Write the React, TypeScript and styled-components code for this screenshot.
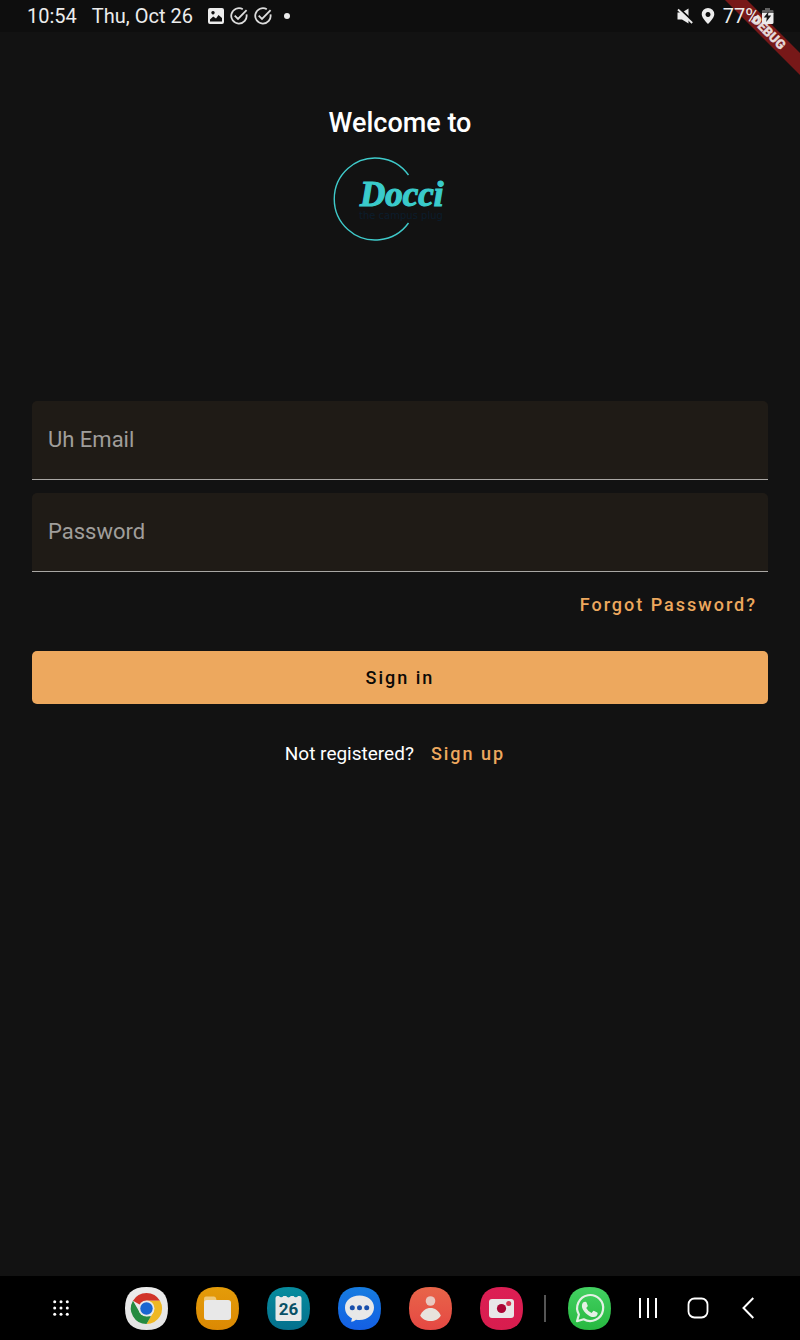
import React from 'react';
import styled, { createGlobalStyle } from 'styled-components';

const GlobalStyle = createGlobalStyle`
  *, *::before, *::after { box-sizing: border-box; }
  body {
    margin: 0;
    background: #121212;
    color: #fff;
    font-family: Roboto, "Liberation Sans", sans-serif;
  }
  button, input { font: inherit; color: inherit; letter-spacing: inherit; }
`;

const Screen = styled.div`
  position: relative;
  display: flex;
  flex-direction: column;
  min-height: 100vh;
  overflow: hidden;
`;

const StatusBar = styled.header`
  display: flex;
  justify-content: space-between;
  align-items: center;
  height: 32px;
  padding: 0 26px 0 27px;
  background: #0e0e0e;
  color: #ececec;
  font-size: 20px;
  line-height: 32px;
`;

const StatusGroup = styled.div<{ $gap: number }>`
  position: relative;
  z-index: 2;
  display: flex;
  align-items: center;
  gap: ${({ $gap }) => $gap}px;
  svg { display: block; }
`;

const StatusIcons = styled.div`
  display: flex;
  align-items: center;
  gap: 6px;
`;

const BatteryLevel = styled.div`
  display: flex;
  align-items: center;
  gap: 1px;
`;

const Ribbon = styled.svg`
  position: absolute;
  top: 0;
  right: 0;
  z-index: 1;
`;

const Main = styled.main`
  flex: 1;
  display: flex;
  flex-direction: column;
  padding: 75px 32px 32px;
`;

const Brand = styled.div`
  display: flex;
  flex-direction: column;
  align-items: center;
  gap: 14px;
  svg { display: block; }
`;

const Title = styled.h1`
  margin: 0;
  font-size: 27px;
  line-height: 32px;
  font-weight: 500;
`;

const Form = styled.form`
  display: flex;
  flex-direction: column;
  margin-top: 158px;
`;

const Field = styled.input`
  width: 100%;
  height: 79px;
  margin-bottom: 13px;
  padding: 0 16px 2px;
  border: 0;
  border-bottom: 1px solid #a9a7a4;
  border-radius: 5px 5px 0 0;
  background: #1f1b16;
  color: #fff;
  font-size: 22px;
  outline: none;
  &::placeholder { color: #a09e9b; opacity: 1; }
`;

const TextLink = styled.a`
  color: #eda85e;
  font-size: 18px;
  line-height: 24px;
  font-weight: 500;
  letter-spacing: 2px;
  text-decoration: none;
`;

const ForgotRow = styled.div`
  display: flex;
  justify-content: flex-end;
  padding: 8px 11px 0 0;
`;

const SubmitButton = styled.button`
  height: 53px;
  margin-top: 34px;
  border: 0;
  border-radius: 5px;
  background: #eda85e;
  color: #0c0906;
  font-size: 18px;
  font-weight: 500;
  letter-spacing: 2px;
`;

const SignUpRow = styled.p`
  display: flex;
  justify-content: center;
  gap: 17px;
  margin: 38px 10px 0 0;
  font-size: 19px;
  line-height: 24px;
`;

const NavBar = styled.nav`
  display: flex;
  align-items: center;
  justify-content: center;
  height: 64px;
  padding: 0 27px 0 39px;
  background: #000;
`;

const NavButton = styled.button<{ $width: number }>`
  display: flex;
  align-items: center;
  justify-content: center;
  width: ${({ $width }) => $width}px;
  height: 43px;
  padding: 0;
  border: 0;
  background: none;
`;

const AppRow = styled.div`
  display: flex;
  gap: 28px;
  margin-left: 43px;
`;

const Divider = styled.span`
  width: 2px;
  height: 27px;
  margin: 0 22px 0 21px;
  background: #555;
`;

const SystemButtons = styled.div`
  display: flex;
  margin-left: 12px;
`;

const tileShape =
  'M21.5 0C36 0 43 7 43 21.5S36 43 21.5 43 0 36 0 21.5 7 0 21.5 0Z';

type TileProps = { label: string; from: string; to: string; children: React.ReactNode };

function AppTile({ label, from, to, children }: TileProps) {
  const id = `tile-${label.toLowerCase()}`;
  return (
    <NavButton type="button" $width={43} aria-label={label}>
      <svg width="43" height="43" viewBox="0 0 43 43">
        <defs>
          <linearGradient id={id} x1="0" y1="0" x2="0" y2="1">
            <stop offset="0" stopColor={from} />
            <stop offset="1" stopColor={to} />
          </linearGradient>
        </defs>
        <path d={tileShape} fill={`url(#${id})`} />
        {children}
      </svg>
    </NavButton>
  );
}

const TaskDone = () => (
  <svg width="18" height="18" viewBox="0 0 18 18" fill="none" stroke="#dcdcdc" strokeWidth="1.8">
    <path d="M12.8 2.2A7.7 7.7 0 1 0 16.5 7.4" />
    <path d="M4.7 8.7 8 12 16.6 3.2" />
  </svg>
);

const DocciLogo = () => (
  <svg width="134" height="90" viewBox="0 0 134 90" role="img" aria-label="Docci, the campus plug">
    <path d="M75.500 22A41 41 0 1 0 75.500 70" fill="none" stroke="#3fcaca" strokeWidth="1.4" />
    <text
      x="27"
      y="53"
      fill="#3acbcb"
      stroke="#3acbcb"
      strokeWidth="1.2"
      fontFamily='"Liberation Serif", serif'
      fontSize="35"
      fontStyle="italic"
      fontWeight="700"
    >
      Docci
    </text>
    <text x="26" y="66" fill="#0c1d2c" fontFamily='"DejaVu Sans", sans-serif' fontSize="10">
      the campus plug
    </text>
  </svg>
);

export default function App() {
  return (
    <Screen>
      <GlobalStyle />
      <StatusBar>
        <StatusGroup $gap={15}>
          <span>10:54</span>
          <span>Thu, Oct 26</span>
          <StatusIcons>
            <svg width="16" height="16" viewBox="0 0 16 16">
              <path
                fill="#ececec"
                fillRule="evenodd"
                d="M2 0h12a2 2 0 0 1 2 2v12a2 2 0 0 1-2 2H2a2 2 0 0 1-2-2V2a2 2 0 0 1 2-2ZM2 13.500H14V10L10.500 7 8 10.500 5.200 8.500 2 11.500ZM5 3a1.700 1.700 0 1 0 .01 0Z"
              />
            </svg>
            <TaskDone />
            <TaskDone />
            <svg width="18" height="18" viewBox="0 0 18 18">
              <circle cx="9" cy="9" r="3" fill="#ececec" />
            </svg>
          </StatusIcons>
        </StatusGroup>
        <StatusGroup $gap={8}>
          <svg width="16" height="16" viewBox="0 0 16 16">
            <path fill="#ececec" d="M.5 4.500H5L11.500.500V15.500L5 11.500H.500Z" />
            <path d="M2 .2 16 13.500" stroke="#0e0e0e" strokeWidth="2" />
            <path d="M1 1.500 15.200 15" stroke="#ececec" strokeWidth="1.800" />
          </svg>
          <svg width="14" height="16" viewBox="0 0 14 16">
            <path
              fill="#ececec"
              fillRule="evenodd"
              d="M7 0a6.300 6.300 0 0 1 6.300 6.300C13.300 10.300 7 16 7 16S.7 10.300.7 6.300A6.300 6.300 0 0 1 7 0ZM7 3.900a2.500 2.500 0 1 0 .01 0Z"
            />
          </svg>
          <BatteryLevel>
            <span>77%</span>
            <svg width="13" height="18" viewBox="0 0 13 18">
              <path fill="#626262" d="M4 1h5v2h2.500a1 1 0 0 1 1 1v3H1V4a1 1 0 0 1 1-1h2Z" />
              <path fill="#ececec" d="M1 6h11.500v9.500a1.500 1.500 0 0 1-1.500 1.500H2.500A1.500 1.500 0 0 1 1 15.500Z" />
              <path fill="#171717" d="M7.500 4.500 2.800 10.500h3l-.6 4.500 5-6.500H7Z" />
            </svg>
          </BatteryLevel>
        </StatusGroup>
      </StatusBar>

      <Ribbon width="76" height="76" viewBox="0 0 76 76" role="img" aria-label="DEBUG">
        <path fill="#771818" d="M1 0H23L76 53V75Z" />
        <text
          transform="translate(45 32) rotate(45)"
          y="5"
          textAnchor="middle"
          fill="#e6dada"
          fontFamily='Roboto, "Liberation Sans", sans-serif'
          fontSize="13"
          fontWeight="900"
          stroke="#e6dada"
          strokeWidth=".4"
        >
          DEBUG
        </text>
      </Ribbon>

      <Main>
        <Brand>
          <Title>Welcome to</Title>
          <DocciLogo />
        </Brand>
        <Form onSubmit={(event) => event.preventDefault()}>
          <Field type="email" aria-label="Uh Email" placeholder="Uh Email" />
          <Field type="password" aria-label="Password" placeholder="Password" />
          <ForgotRow>
            <TextLink href="#forgot">Forgot Password?</TextLink>
          </ForgotRow>
          <SubmitButton type="submit">Sign in</SubmitButton>
        </Form>
        <SignUpRow>
          <span>Not registered?</span>
          <TextLink href="#signup">Sign up</TextLink>
        </SignUpRow>
      </Main>

      <NavBar>
        <NavButton type="button" $width={43} aria-label="All apps">
          <svg width="18" height="18" viewBox="0 0 18 18" fill="#fff">
            {[2.7, 9, 15.3].map((y) =>
              [2.7, 9, 15.3].map((x) => <circle key={`${x}-${y}`} cx={x} cy={y} r="1.5" />),
            )}
          </svg>
        </NavButton>
        <AppRow>
          <AppTile label="Chrome" from="#ececec" to="#e4e4e4">
            <path d="M21.500 21.500 7.980 13.700A15.600 15.600 0 0 1 35 13.700H21.500Z" fill="#d13429" />
            <path d="M21.500 13.700H35A15.600 15.600 0 0 1 21.500 37.100L28.250 25.400Z" fill="#efb824" />
            <path d="M7.980 13.700 14.750 25.400 21.500 29.300H26L21.500 37.100A15.600 15.600 0 0 1 7.980 13.700Z" fill="#258b40" />
            <circle cx="21.500" cy="21.500" r="8" fill="#e8e8e8" />
            <circle cx="21.500" cy="21.500" r="6.200" fill="#1966d2" />
          </AppTile>
          <AppTile label="Files" from="#e49c09" to="#dc8903">
            <path d="M8 20v-8.500a2 2 0 0 1 2-2h8q1.500 0 2 1.500l1 4Z" fill="#efc878" />
            <rect x="8" y="13" width="27" height="20" rx="3" fill="#e8e8e8" />
          </AppTile>
          <AppTile label="Calendar" from="#078c9e" to="#04708d">
            <path
              fill="#e8e8e8"
              d="M10.500 9h1.500a2.600 2.600 0 0 0 4.400 0h2.800a2.600 2.600 0 0 0 4.600 0h2.800a2.600 2.600 0 0 0 4.400 0h1.500a2 2 0 0 1 2 2v21a2 2 0 0 1-2 2h-22a2 2 0 0 1-2-2V11a2 2 0 0 1 2-2Z"
            />
            <text
              x="21.500"
              y="28"
              textAnchor="middle"
              fill="#0a5167"
              fontFamily='Roboto, "Liberation Sans", sans-serif'
              fontSize="17"
              fontWeight="700"
            >
              26
            </text>
          </AppTile>
          <AppTile label="Messages" from="#167ce0" to="#145fe4">
            <path
              fill="#e8e8e8"
              d="M21.500 8.500C30 8.500 36 13.600 36 20.500S30 33 21.500 33q-2 0-3.500-.3-2.500 2-4.500 2-.7-.3 0-1.500l.5-1.900C9.500 29 7 25.500 7 20.500 7 13.600 13 8.500 21.500 8.500Z"
            />
            <circle cx="14.300" cy="20.700" r="2.500" fill="#184fac" />
            <circle cx="21.500" cy="20.700" r="2.500" fill="#184fac" />
            <circle cx="28.700" cy="20.700" r="2.500" fill="#184fac" />
          </AppTile>
          <AppTile label="Contacts" from="#e86549" to="#e54843">
            <circle cx="21.500" cy="14" r="4.800" fill="#e9c8c0" />
            <path d="M11.200 28.500C13.500 23.500 17 21 21.500 21S29.500 23.500 31.800 28.500C29.500 32.500 26 34 21.500 34S13.500 32.500 11.200 28.500Z" fill="#e8e3dd" />
          </AppTile>
          <AppTile label="Camera" from="#dc1e54" to="#d81d4e">
            <rect x="9" y="12" width="25" height="19" rx="3" fill="#e8e8e8" />
            <circle cx="21.500" cy="21.500" r="4.600" fill="#ab0735" />
            <circle cx="28.700" cy="16.500" r="2.500" fill="#d63652" />
          </AppTile>
        </AppRow>
        <Divider />
        <AppTile label="WhatsApp" from="#43d162" to="#27b840">
          <g fill="none" stroke="#e4f0e5" strokeWidth="2.200" strokeLinejoin="round">
            <path d="M9 34.200 10.900 27.500A13 13 0 1 1 15.700 32.300Z" />
          </g>
          <path
            fill="#e4f0e5"
            d="M17.500 14.700q.6 0 .9.600l1.300 3.200q.2.500-.2 1l-1.300 1.600q1.900 3.500 5.400 5l1.600-2q.4-.5 1-.2l3 1.500q.6.300.5.900-.3 3.500-4.200 3.700-3.500 0-7.500-3.600-4.100-3.900-4.100-7.400 0-4.200 3.600-4.300Z"
          />
        </AppTile>
        <SystemButtons>
          <NavButton type="button" $width={50} aria-label="Recent apps">
            <svg width="20" height="22" viewBox="0 0 20 22" stroke="#fff" strokeWidth="2">
              <path d="M2 1v20M10 1v20M18 1v20" />
            </svg>
          </NavButton>
          <NavButton type="button" $width={50} aria-label="Home">
            <svg width="22" height="22" viewBox="0 0 22 22" fill="none" stroke="#fff" strokeWidth="1.800">
              <rect x="1.500" y="1.500" width="19" height="19" rx="6" />
            </svg>
          </NavButton>
          <NavButton type="button" $width={50} aria-label="Back">
            <svg width="12" height="22" viewBox="0 0 12 22" fill="none" stroke="#fff" strokeWidth="2">
              <path d="M11.300 1 1.500 11l9.800 10" />
            </svg>
          </NavButton>
        </SystemButtons>
      </NavBar>
    </Screen>
  );
}
